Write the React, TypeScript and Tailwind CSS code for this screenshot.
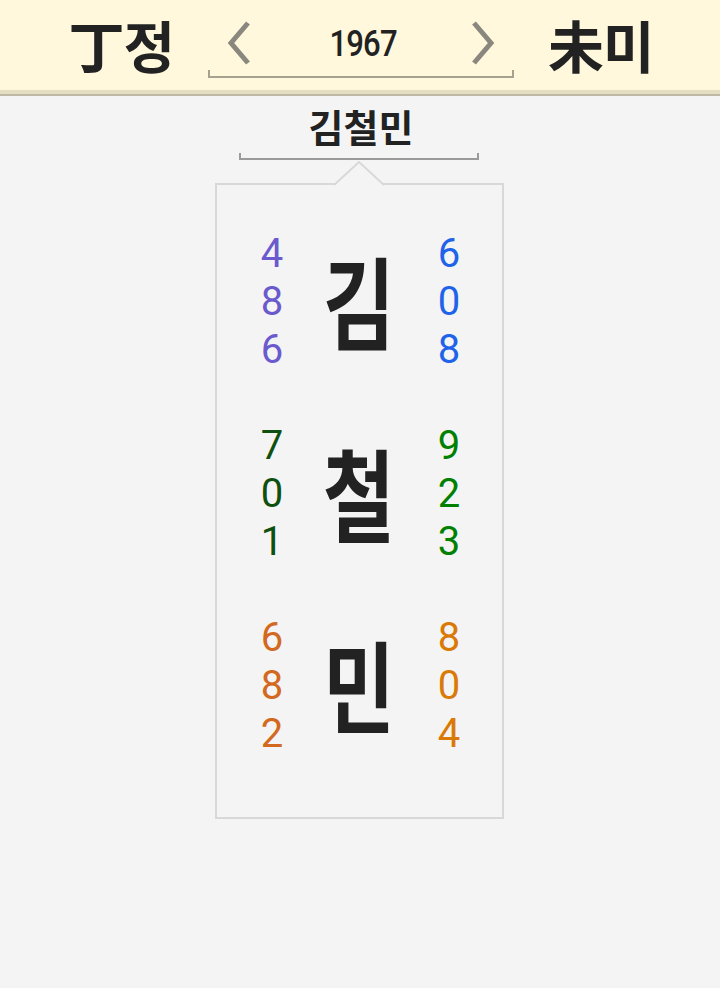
import React from "react";

const font = { fontFamily: '"Noto Sans CJK KR", "Noto Sans", sans-serif' };
const digitFont = { fontFamily: 'Roboto, "Noto Sans", sans-serif' };

type Group = { ch: string; left: string[]; right: string[]; lc: string; rc: string };

const groups: Group[] = [
  { ch: "김", left: ["4", "8", "6"], right: ["6", "0", "8"], lc: "text-[#6a5acd]", rc: "text-[#1e63e9]" },
  { ch: "철", left: ["7", "0", "1"], right: ["9", "2", "3"], lc: "text-[#0f4f0f]", rc: "text-[#008000]" },
  { ch: "민", left: ["6", "8", "2"], right: ["8", "0", "4"], lc: "text-[#d2691e]", rc: "text-[#d97a06]" },
];

function Chevron({ dir }: { dir: "l" | "r" }) {
  return (
    <svg width="26" height="44" viewBox="0 0 26 44" className="block">
      <polyline
        points={dir === "l" ? "22,2 5,22 22,42" : "4,2 21,22 4,42"}
        fill="none"
        stroke="#8a887e"
        strokeWidth="5"
      />
    </svg>
  );
}

export default function App() {
  return (
    <div className="w-[720px] h-[988px] bg-[#f4f4f4] text-[#222]" style={font}>
      <div className="h-[96px] bg-[#fff8dc] border-b-[6px] border-[#e6dec2] relative">
        <div className="absolute left-0 right-0 bottom-[-6px] h-[2px] bg-[#bfb8a2]" />
        <div className="flex items-start h-[90px]">
          <div className="w-[208px] flex justify-end pr-[34px] pt-[10px] text-[56px] font-bold leading-[68px] tracking-[-1px]">
            丁정
          </div>
          <div className="w-[306px] relative h-[78px]">
            <div className="absolute left-0 right-0 top-[76px] h-[2px] bg-[#a5a28f]" />
            <div className="absolute left-0 top-[70px] w-[2px] h-[8px] bg-[#a5a28f]" />
            <div className="absolute right-0 top-[70px] w-[2px] h-[8px] bg-[#a5a28f]" />
            <div className="flex items-center h-[90px] pb-[2px]">
              <div className="pl-[18px] -mt-[2px]">
                <Chevron dir="l" />
              </div>
              <div className="flex-1 flex justify-center pl-[4px]">
                <span
                  className="inline-block text-[37px] font-medium leading-[40px] tracking-[-1px] scale-x-[0.84]"
                  style={digitFont}
                >
                  1967
                </span>
              </div>
              <div className="pr-[18px] -mt-[2px]">
                <Chevron dir="r" />
              </div>
            </div>
          </div>
          <div className="pl-[34px] pt-[10px] text-[56px] font-bold leading-[68px] tracking-[-1px]">未미</div>
        </div>
      </div>

      <div className="flex flex-col items-center">
        <div className="text-[38px] font-bold leading-[48px] mt-[6px] pl-[2px]">김철민</div>
        <div className="relative w-[240px] h-[8px] -ml-[2px] mt-[2px]">
          <div className="absolute left-0 right-0 bottom-0 h-[2px] bg-[#9a9a9a]" />
          <div className="absolute left-0 bottom-0 w-[2px] h-[7px] bg-[#9a9a9a]" />
          <div className="absolute right-0 bottom-0 w-[2px] h-[7px] bg-[#9a9a9a]" />
        </div>

        <div className="relative mt-[23px] w-[289px] -ml-[1px] border-2 border-[#d8d8d8] bg-[#f4f4f4] pt-[45px] pb-[59px]">
          <svg
            className="absolute left-[117px] top-[-24px]"
            width="50"
            height="26"
            viewBox="0 0 50 26"
          >
            <polygon points="1,24 25,1 49,24" fill="#f4f4f4" />
            <polyline points="0,24 25,1 50,24" fill="none" stroke="#d8d8d8" strokeWidth="2" />
            <rect x="2" y="23" width="46" height="4" fill="#f4f4f4" />
          </svg>
          {groups.map((g, i) => (
            <div key={i} className={`flex items-center ${i > 0 ? "mt-[48px]" : ""}`}>
              <div
                className={`w-[110px] flex flex-col items-center text-[40px] font-normal leading-[48px] ${g.lc}`}
                style={digitFont}
              >
                {g.left.map((d, j) => (
                  <span key={j}>{d}</span>
                ))}
              </div>
              <div className="w-[64px] flex justify-center text-[100px] font-bold leading-[110px] -mt-[6px]">
                <span className="inline-block scale-x-[0.78]">{g.ch}</span>
              </div>
              <div
                className={`w-[100px] pl-[16px] flex flex-col items-center text-[40px] font-normal leading-[48px] ${g.rc}`}
                style={digitFont}
              >
                {g.right.map((d, j) => (
                  <span key={j}>{d}</span>
                ))}
              </div>
            </div>
          ))}
        </div>
      </div>
    </div>
  );
}
